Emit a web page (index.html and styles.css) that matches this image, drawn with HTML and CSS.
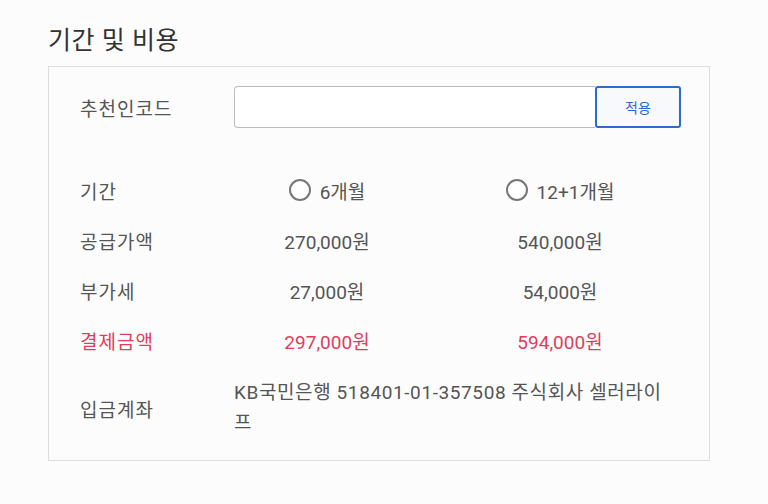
FILE: index.html
```html
<!DOCTYPE html>
<html lang="ko">
<head>
<meta charset="utf-8">
<link rel="stylesheet" href="styles.css">
</head>
<body>
<section class="section">
  <h2 class="title">기간 및 비용</h2>
  <div class="box">
    <div class="row row-code">
      <div class="label">추천인코드</div>
      <div class="code-field">
        <input class="code-input" type="text">
        <button class="apply-btn" type="button">적용</button>
      </div>
    </div>
    <div class="table">
      <div class="row">
        <div class="label">기간</div>
        <label class="cell radio"><span class="radio-circle"></span>6개월</label>
        <label class="cell radio"><span class="radio-circle"></span>12+1개월</label>
      </div>
      <div class="row">
        <div class="label">공급가액</div>
        <div class="cell">270,000원</div>
        <div class="cell">540,000원</div>
      </div>
      <div class="row">
        <div class="label">부가세</div>
        <div class="cell">27,000원</div>
        <div class="cell">54,000원</div>
      </div>
      <div class="row total">
        <div class="label">결제금액</div>
        <div class="cell">297,000원</div>
        <div class="cell">594,000원</div>
      </div>
      <div class="row row-account">
        <div class="label">입금계좌</div>
        <div class="account">KB국민은행 518401-01-357508 주식회사 셀러라이프</div>
      </div>
    </div>
  </div>
</section>
</body>
</html>
```
FILE: styles.css
```css
* { box-sizing: border-box; }
html, body {
  margin: 0;
  background: #fcfcfc;
}
body {
  font-family: Roboto, "Noto Sans CJK KR", sans-serif;
  color: #555;
}
.section {
  padding: 26px 0 0 48px;
}
.title {
  margin: 0 0 10px 0;
  font-size: 25px;
  font-weight: 400;
  line-height: 30px;
  color: #333;
  letter-spacing: 0.5px;
}
.box {
  width: 662px;
  border: 1px solid #ddd;
  background: #fcfcfc;
  padding: 19px 0 22px 31px;
}
.row {
  display: grid;
  grid-template-columns: 154px 186px 280px;
  align-items: center;
  height: 50px;
  font-size: 19px;
}
.label {
  letter-spacing: 1px;
}
.row-code {
  display: flex;
  height: 42px;
  margin-bottom: 37px;
}
.row-code .label { width: 154px; }
.code-field {
  display: flex;
  width: 447px;
  height: 42px;
}
.code-input {
  flex: 1;
  height: 42px;
  border: 1px solid #bbb;
  border-right: none;
  border-radius: 4px 0 0 4px;
  background: #fff;
  margin: 0;
  padding: 0 10px;
  outline: none;
}
.apply-btn {
  width: 86px;
  height: 42px;
  margin: 0;
  border: 2px solid #2a6bd0;
  border-radius: 3px;
  background: #f8f9fa;
  color: #2a6bd0;
  font-family: Roboto, "Noto Sans CJK KR", sans-serif;
  font-size: 14px;
}
.cell {
  text-align: center;
}
.radio {
  display: flex;
  align-items: center;
  justify-content: center;
  gap: 9px;
}
.radio-circle {
  width: 22px;
  height: 22px;
  border: 2px solid #777;
  border-radius: 50%;
  background: #fff;
}
.total { color: #e03c5c; }
.row-account {
  display: flex;
  height: auto;
  margin-top: 13px;
}
.row-account .label { width: 154px; flex: none; }
.account {
  width: 440px;
  line-height: 30px;
  letter-spacing: 0.6px;
}
```
